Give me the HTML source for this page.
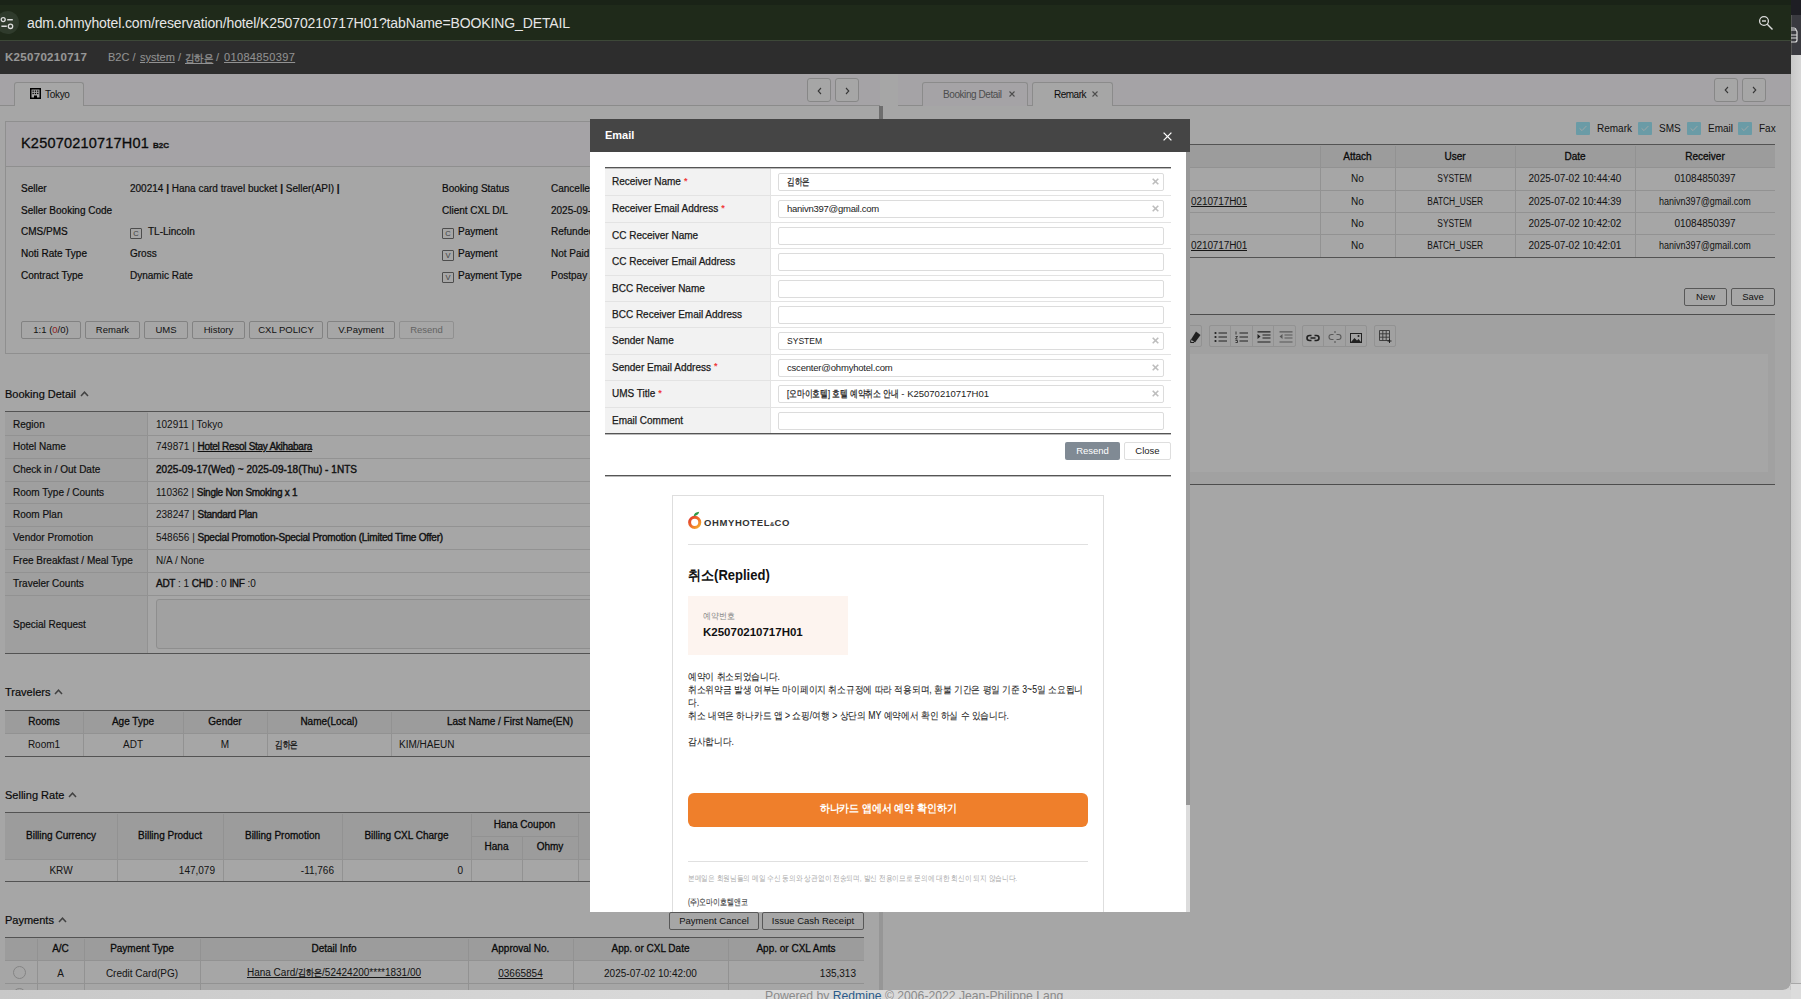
<!DOCTYPE html>
<html><head><meta charset="utf-8">
<style>
*{box-sizing:border-box;margin:0;padding:0}
html,body{width:1801px;height:999px;overflow:hidden}
body{font-family:"Liberation Sans",sans-serif;background:#d4d4d4;position:relative;color:#222}
.abs{position:absolute}
#win{position:absolute;left:0;top:0;width:1791px;height:990px;overflow:hidden;border-bottom-right-radius:8px;background:#fff}
#chrome{position:absolute;left:0;top:0;width:1791px;height:41px;background:#1f2a1a;border-top:5px solid #1a2317;border-bottom:1px solid #3d4838}
#url{position:absolute;left:27px;top:10px;font-size:14px;color:#e6e6e6;white-space:nowrap;letter-spacing:-0.12px}
#page{position:absolute;left:0;top:41px;width:1791px;height:949px;background:#fff}
#crumb{position:absolute;left:0;top:0;width:1791px;height:33px;background:#454545;color:#ddd;font-size:11px}
#overlay{position:absolute;left:0;top:41px;width:1791px;height:949px;background:rgba(0,0,0,.35)}
#modal{position:absolute;left:590px;top:119px;width:600px;height:793px;background:#fff;overflow:hidden}

#crumb b{position:absolute;left:5px;top:10px;font-size:11.5px;color:#e8e8e8;letter-spacing:0.3px}
#crumb .bc{position:absolute;left:108px;top:10px;font-size:11px;color:#e0e0e0;white-space:nowrap}
#crumb .bc u{text-decoration:underline}
#lp{position:absolute;left:0;top:33px;width:883px;height:916px;background:#fff;overflow:hidden}
.tabstrip{position:absolute;left:0;top:0;height:32px;background:#fdfbff;border-bottom:1px solid #d6d6d6}
.tab{position:absolute;top:8px;height:24px;border:1px solid #d6d6d6;border-bottom:none;border-radius:3px 3px 0 0;background:#fff;font-size:10px;color:#222}
.navb{position:absolute;top:4px;width:24px;height:24px;border:1px solid #d0d0d0;border-radius:3px;background:#fff}
.navb svg{position:absolute;left:8px;top:7px}
.card{position:absolute;left:5px;top:47px;width:870px;height:233px;border:1px solid #dcdcdc;background:#fff}
.card .hd{height:45px;margin-bottom:1px;background:#fdfbff;border-bottom:1px solid #dcdcdc;position:relative}
.card .ttl{position:absolute;left:15px;top:13px;font-size:14.5px;color:#111;letter-spacing:0.2px}
.card .ttl small{font-size:8px;font-weight:bold;margin-left:4px;letter-spacing:0;color:#222}
.kv{position:absolute;margin-top:1px;font-size:10px;color:#111;white-space:nowrap;-webkit-text-stroke:0.2px #111}
.kv.v{color:#222}
.badge{display:inline-block;width:12px;height:11px;border:1px solid #777;border-radius:1px;font-size:7.5px;line-height:9px;text-align:center;color:#666;vertical-align:-1px;margin-right:4px;-webkit-text-stroke:0;font-family:"Liberation Sans",sans-serif}
.btn{position:absolute;top:199px;height:18px;border:1px solid #c8c8c8;border-radius:2px;background:#fff;font-size:9.5px;line-height:16px;text-align:center;color:#222}
.sec{position:absolute;left:5px;font-size:11px;color:#111;-webkit-text-stroke:0.2px #111}
.sec svg{margin-left:4px;vertical-align:1px}
table.t{position:absolute;border-collapse:collapse;font-size:10px;color:#222}
table.t td,table.t th{border:1px solid #dedede;font-weight:normal}

.c{font-size:10px;color:#222;white-space:nowrap;overflow:hidden}
.lb{color:#1a1a1a;-webkit-text-stroke:0.2px #1a1a1a}
.hd{color:#111;-webkit-text-stroke:0.3px #111;padding-bottom:2px}
.pbtn{height:18px;border:1px solid #888;border-radius:2px;background:#fff;font-size:9.5px;line-height:16px;text-align:center;color:#222}

.ml{display:flex;align-items:center;font-size:10px;color:#1a1a1a;white-space:nowrap;-webkit-text-stroke:0.25px #1a1a1a}
.req{color:#f03a3a;margin-left:3px;font-weight:bold;font-size:9px;-webkit-text-stroke:0;position:relative;top:-1px}
.inp{width:386px;height:18px;border:1px solid #dcdcdc;border-radius:2px;background:#fff;font-size:9.5px;color:#222;padding-left:8px;line-height:16px;white-space:nowrap}
.kp{font-size:10px;line-height:13px;color:#222;white-space:nowrap}
.sb{font-weight:normal;-webkit-text-stroke:0.4px #1a1a1a;letter-spacing:-0.28px;color:#1a1a1a}
</style></head><body>
<div class="abs" style="left:1790px;top:0;width:11px;height:999px;background:linear-gradient(90deg,#c6c6c6,#cbcbcb 30%,#d7d7d7)"></div>
<div class="abs" style="left:1791px;top:0;width:10px;height:15px;background:#1e1e24"></div>
<div class="abs" style="left:1791px;top:15px;width:10px;height:40px;background:#3a3a40;border-left:1px solid #555"></div>
<svg class="abs" style="left:1789px;top:27px" width="10" height="16" viewBox="0 0 10 16"><path d="M1 3 H6 A2 2 0 0 1 8 5 V13 A2 2 0 0 1 6 15 H1 M1 8 H7.5 M1 11 H7.5" fill="none" stroke="#ddd" stroke-width="1.2"/><path d="M1 1 H5 A2 2 0 0 1 7 3" fill="none" stroke="#ddd" stroke-width="1.2"/></svg>
<div class="abs" style="left:1791px;top:983px;width:10px;height:16px;background:#dcdcdc;border-top:1px solid #a8a8a8"></div>
<div class="abs" style="left:0;top:990px;width:1791px;height:9px;background:linear-gradient(90deg,#c8c8c8,#dadada 40%,#d8d8d8)"></div>
<div class="abs" style="left:765px;top:989px;font-size:12.2px;color:#8a8a8a;white-space:nowrap">Powered by <span style="color:#2a5a8a">Redmine</span> © 2006-2022 Jean-Philippe Lang</div>
<div id="win">
  <div id="chrome">
    <div class="abs" style="left:-4px;top:6px;width:23px;height:23px;border-radius:12px;background:#2f3b2c"></div><svg class="abs" style="left:0;top:6px" width="16" height="20" viewBox="0 0 16 20"><circle cx="3.2" cy="8.6" r="2" fill="none" stroke="#ddd" stroke-width="1.3"/><path d="M7.2 8.8H12.8M1.4 15.2H6.8" stroke="#ddd" stroke-width="1.4"/><circle cx="10.5" cy="15.3" r="2.2" fill="none" stroke="#ddd" stroke-width="1.3"/></svg>
    <svg class="abs" style="left:1758px;top:10px" width="16" height="16" viewBox="0 0 16 16"><circle cx="6" cy="6" r="4.4" fill="none" stroke="#ddd" stroke-width="1.3"/><path d="M4 6H8" stroke="#ddd" stroke-width="1.4"/><path d="M9.3 9.3L14.5 14.5" stroke="#ddd" stroke-width="1.4"/></svg><div id="url">adm.ohmyhotel.com/reservation/hotel/K25070210717H01?tabName=BOOKING_DETAIL</div>
  </div>
  <div id="page">

    <div id="crumb"><b>K25070210717</b><span class="bc">B2C /</span><span class="bc" style="left:140px"><u>system</u> /</span><span class="bc" style="left:185px"><u style="display:inline-block;transform:scaleX(.86);transform-origin:0 0;-webkit-text-stroke:0.25px currentColor">김하은</u></span><span class="bc" style="left:216px">/</span><span class="bc" style="left:224px;letter-spacing:0.35px"><u>01084850397</u></span></div>
    <div id="lp">
      <div class="tabstrip" style="width:880px">
        <div class="tab" style="left:14px;width:70px"><svg class="abs" style="left:15px;top:5px" width="11" height="11" viewBox="0 0 11 11"><rect x="0" y="0" width="11" height="11" fill="#000"/><rect x="1.5" y="1.5" width="8" height="8" fill="#fff"/><g fill="#000"><rect x="2.5" y="2.5" width="1.3" height="1.3"/><rect x="4.8" y="2.5" width="1.3" height="1.3"/><rect x="7.1" y="2.5" width="1.3" height="1.3"/><rect x="2.5" y="4.8" width="1.3" height="1.3"/><rect x="4.8" y="4.8" width="1.3" height="1.3"/><rect x="7.1" y="4.8" width="1.3" height="1.3"/><rect x="4" y="7.5" width="3" height="2.5"/></g></svg><span class="abs" style="left:30px;top:6px;letter-spacing:-0.3px">Tokyo</span></div>
        <div class="navb" style="left:807px"><svg width="7" height="10" viewBox="0 0 7 10"><path d="M5 2 L2.2 5 L5 8" stroke="#555" stroke-width="1.1" fill="none"/></svg></div>
        <div class="navb" style="left:835px"><svg width="7" height="10" viewBox="0 0 7 10"><path d="M2 2 L4.8 5 L2 8" stroke="#555" stroke-width="1.1" fill="none"/></svg></div>
      </div>
      <div class="card">
        <div class="hd"><div class="ttl">K25070210717H01<small>B2C</small></div></div>
        <div class="kv" style="left:15px;top:60px">Seller</div>
        <div class="kv v" style="left:124px;top:60px">200214 <b>|</b> Hana card travel bucket <b>|</b> Seller(API) <b>|</b></div>
        <div class="kv" style="left:15px;top:82px">Seller Booking Code</div>
        <div class="kv" style="left:15px;top:103px">CMS/PMS</div>
        <div class="kv v" style="left:124px;top:103px"><span class="badge" style="margin-right:6px">C</span>TL-Lincoln</div>
        <div class="kv" style="left:15px;top:125px">Noti Rate Type</div>
        <div class="kv v" style="left:124px;top:125px">Gross</div>
        <div class="kv" style="left:15px;top:147px">Contract Type</div>
        <div class="kv v" style="left:124px;top:147px">Dynamic Rate</div>
        <div class="kv" style="left:436px;top:60px">Booking Status</div>
        <div class="kv v" style="left:545px;top:60px">Cancelled</div>
        <div class="kv" style="left:436px;top:82px">Client CXL D/L</div>
        <div class="kv v" style="left:545px;top:82px">2025-09-16 23:59</div>
        <div class="kv" style="left:436px;top:103px"><span class="badge">C</span>Payment</div>
        <div class="kv v" style="left:545px;top:103px">Refunded</div>
        <div class="kv" style="left:436px;top:125px"><span class="badge">V</span>Payment</div>
        <div class="kv v" style="left:545px;top:125px">Not Paid</div>
        <div class="kv" style="left:436px;top:147px"><span class="badge">V</span>Payment Type</div>
        <div class="kv v" style="left:545px;top:147px">Postpay / Card</div>
        <div class="btn" style="left:15px;width:60px">1:1 (<span style="color:#d33">0</span>/0)</div>
        <div class="btn" style="left:79px;width:55px">Remark</div>
        <div class="btn" style="left:138px;width:44px">UMS</div>
        <div class="btn" style="left:186px;width:53px">History</div>
        <div class="btn" style="left:243px;width:74px">CXL POLICY</div>
        <div class="btn" style="left:321px;width:68px">V.Payment</div>
        <div class="btn" style="left:393px;width:55px;color:#999;border-color:#ddd">Resend</div>
      </div>
<!--LPT-->
<div class="sec" style="top:314px">Booking Detail<svg width="9" height="6" viewBox="0 0 9 6"><path d="M1 5 L4.5 1.2 L8 5" stroke="#666" stroke-width="1.5" fill="none"/></svg></div>
<div class="abs" style="left:5px;top:338px;width:143px;height:241px;background:#f5f5f5"></div>
<div class="abs" style="left:5px;top:337px;width:859px;height:1px;background:#808080"></div>
<div class="abs" style="left:5px;top:361px;width:859px;height:1px;background:#e0e0e0"></div>
<div class="abs" style="left:5px;top:384px;width:859px;height:1px;background:#e0e0e0"></div>
<div class="abs" style="left:5px;top:407px;width:859px;height:1px;background:#e0e0e0"></div>
<div class="abs" style="left:5px;top:429px;width:859px;height:1px;background:#e0e0e0"></div>
<div class="abs" style="left:5px;top:452px;width:859px;height:1px;background:#e0e0e0"></div>
<div class="abs" style="left:5px;top:475px;width:859px;height:1px;background:#e0e0e0"></div>
<div class="abs" style="left:5px;top:498px;width:859px;height:1px;background:#e0e0e0"></div>
<div class="abs" style="left:5px;top:521px;width:859px;height:1px;background:#e0e0e0"></div>
<div class="abs" style="left:5px;top:579px;width:859px;height:1px;background:#808080"></div>
<div class="abs" style="left:147px;top:339px;width:1px;height:240px;background:#e0e0e0"></div>
<div class="abs c lb" style="left:5px;top:339px;width:142px;height:22px;display:flex;align-items:center;justify-content:flex-start;padding-left:8px;"><span>Region</span></div>
<div class="abs c vl" style="left:148px;top:339px;width:716px;height:22px;display:flex;align-items:center;justify-content:flex-start;padding-left:8px;"><span>102911 | Tokyo</span></div>
<div class="abs c lb" style="left:5px;top:361px;width:142px;height:23px;display:flex;align-items:center;justify-content:flex-start;padding-left:8px;"><span>Hotel Name</span></div>
<div class="abs c vl" style="left:148px;top:361px;width:716px;height:23px;display:flex;align-items:center;justify-content:flex-start;padding-left:8px;"><span>749871 | <b class="sb"><u>Hotel Resol Stay Akihabara</u></b></span></div>
<div class="abs c lb" style="left:5px;top:384px;width:142px;height:23px;display:flex;align-items:center;justify-content:flex-start;padding-left:8px;"><span>Check in / Out Date</span></div>
<div class="abs c vl" style="left:148px;top:384px;width:716px;height:23px;display:flex;align-items:center;justify-content:flex-start;padding-left:8px;"><span><b class="sb" style="letter-spacing:0.05px">2025-09-17(Wed) ~ 2025-09-18(Thu) - 1NTS</b></span></div>
<div class="abs c lb" style="left:5px;top:407px;width:142px;height:22px;display:flex;align-items:center;justify-content:flex-start;padding-left:8px;"><span>Room Type / Counts</span></div>
<div class="abs c vl" style="left:148px;top:407px;width:716px;height:22px;display:flex;align-items:center;justify-content:flex-start;padding-left:8px;"><span>110362 | <b class="sb">Single Non Smoking x 1</b></span></div>
<div class="abs c lb" style="left:5px;top:429px;width:142px;height:23px;display:flex;align-items:center;justify-content:flex-start;padding-left:8px;"><span>Room Plan</span></div>
<div class="abs c vl" style="left:148px;top:429px;width:716px;height:23px;display:flex;align-items:center;justify-content:flex-start;padding-left:8px;"><span>238247 | <b class="sb">Standard Plan</b></span></div>
<div class="abs c lb" style="left:5px;top:452px;width:142px;height:23px;display:flex;align-items:center;justify-content:flex-start;padding-left:8px;"><span>Vendor Promotion</span></div>
<div class="abs c vl" style="left:148px;top:452px;width:716px;height:23px;display:flex;align-items:center;justify-content:flex-start;padding-left:8px;"><span>548656 | <b class="sb" style="letter-spacing:-0.2px">Special Promotion-Special Promotion (Limited Time Offer)</b></span></div>
<div class="abs c lb" style="left:5px;top:475px;width:142px;height:23px;display:flex;align-items:center;justify-content:flex-start;padding-left:8px;"><span>Free Breakfast / Meal Type</span></div>
<div class="abs c vl" style="left:148px;top:475px;width:716px;height:23px;display:flex;align-items:center;justify-content:flex-start;padding-left:8px;"><span>N/A / None</span></div>
<div class="abs c lb" style="left:5px;top:498px;width:142px;height:23px;display:flex;align-items:center;justify-content:flex-start;padding-left:8px;"><span>Traveler Counts</span></div>
<div class="abs c vl" style="left:148px;top:498px;width:716px;height:23px;display:flex;align-items:center;justify-content:flex-start;padding-left:8px;"><span><b class="sb">ADT</b> : 1 <b class="sb">CHD</b> : 0 <b class="sb">INF</b> :0</span></div>
<div class="abs c lb" style="left:5px;top:521px;width:142px;height:58px;display:flex;align-items:center;justify-content:flex-start;padding-left:8px;"><span>Special Request</span></div>
<div class="abs" style="left:156px;top:525px;width:700px;height:50px;border:1px solid #dadada;border-radius:3px;background:#f7f7f7"></div>
<div class="sec" style="top:612px">Travelers<svg width="9" height="6" viewBox="0 0 9 6"><path d="M1 5 L4.5 1.2 L8 5" stroke="#666" stroke-width="1.5" fill="none"/></svg></div>
<div class="abs" style="left:5px;top:637px;width:859px;height:22px;background:#f0f0f0"></div>
<div class="abs" style="left:5px;top:636px;width:859px;height:1px;background:#808080"></div>
<div class="abs" style="left:5px;top:659px;width:859px;height:1px;background:#e0e0e0"></div>
<div class="abs" style="left:5px;top:682px;width:859px;height:1px;background:#808080"></div>
<div class="abs" style="left:83px;top:638px;width:1px;height:44px;background:#e0e0e0"></div>
<div class="abs" style="left:183px;top:638px;width:1px;height:44px;background:#e0e0e0"></div>
<div class="abs" style="left:267px;top:638px;width:1px;height:44px;background:#e0e0e0"></div>
<div class="abs" style="left:391px;top:638px;width:1px;height:44px;background:#e0e0e0"></div>
<div class="abs" style="left:629px;top:638px;width:1px;height:44px;background:#e0e0e0"></div>
<div class="abs c hd" style="left:5px;top:638px;width:78px;height:21px;display:flex;align-items:center;justify-content:center;"><span>Rooms</span></div>
<div class="abs c hd" style="left:83px;top:638px;width:100px;height:21px;display:flex;align-items:center;justify-content:center;"><span>Age Type</span></div>
<div class="abs c hd" style="left:183px;top:638px;width:84px;height:21px;display:flex;align-items:center;justify-content:center;"><span>Gender</span></div>
<div class="abs c hd" style="left:267px;top:638px;width:124px;height:21px;display:flex;align-items:center;justify-content:center;"><span>Name(Local)</span></div>
<div class="abs c hd" style="left:391px;top:638px;width:238px;height:21px;display:flex;align-items:center;justify-content:center;"><span>Last Name / First Name(EN)</span></div>
<div class="abs" style="left:629px;top:638px;width:1px;height:44px;background:#e0e0e0"></div>
<div class="abs c dt" style="left:5px;top:659px;width:78px;height:23px;display:flex;align-items:center;justify-content:center;"><span>Room1</span></div>
<div class="abs c dt" style="left:83px;top:659px;width:100px;height:23px;display:flex;align-items:center;justify-content:center;"><span>ADT</span></div>
<div class="abs c dt" style="left:183px;top:659px;width:84px;height:23px;display:flex;align-items:center;justify-content:center;"><span>M</span></div>
<div class="abs c dt" style="left:267px;top:659px;width:124px;height:23px;display:flex;align-items:center;justify-content:flex-start;padding-left:8px;"><span><span style="display:inline-block;transform:scaleX(.76);transform-origin:0 50%;margin-right:-7px;-webkit-text-stroke:0.3px currentColor">김하은</span></span></div>
<div class="abs c dt" style="left:391px;top:659px;width:473px;height:23px;display:flex;align-items:center;justify-content:flex-start;padding-left:8px;"><span>KIM/HAEUN</span></div>
<div class="sec" style="top:715px">Selling Rate<svg width="9" height="6" viewBox="0 0 9 6"><path d="M1 5 L4.5 1.2 L8 5" stroke="#666" stroke-width="1.5" fill="none"/></svg></div>
<div class="abs" style="left:5px;top:739px;width:859px;height:46px;background:#f0f0f0"></div>
<div class="abs" style="left:5px;top:738px;width:859px;height:1px;background:#808080"></div>
<div class="abs" style="left:471px;top:762px;width:107px;height:1px;background:#e0e0e0"></div>
<div class="abs" style="left:5px;top:785px;width:859px;height:1px;background:#e0e0e0"></div>
<div class="abs" style="left:5px;top:807px;width:859px;height:1px;background:#808080"></div>
<div class="abs" style="left:117px;top:740px;width:1px;height:67px;background:#e0e0e0"></div>
<div class="abs" style="left:223px;top:740px;width:1px;height:67px;background:#e0e0e0"></div>
<div class="abs" style="left:342px;top:740px;width:1px;height:67px;background:#e0e0e0"></div>
<div class="abs" style="left:471px;top:740px;width:1px;height:67px;background:#e0e0e0"></div>
<div class="abs" style="left:578px;top:740px;width:1px;height:67px;background:#e0e0e0"></div>
<div class="abs" style="left:650px;top:740px;width:1px;height:67px;background:#e0e0e0"></div>
<div class="abs" style="left:522px;top:762px;width:1px;height:45px;background:#e0e0e0"></div>
<div class="abs c hd" style="left:5px;top:740px;width:112px;height:45px;display:flex;align-items:center;justify-content:center;"><span>Billing Currency</span></div>
<div class="abs c hd" style="left:117px;top:740px;width:106px;height:45px;display:flex;align-items:center;justify-content:center;"><span>Billing Product</span></div>
<div class="abs c hd" style="left:223px;top:740px;width:119px;height:45px;display:flex;align-items:center;justify-content:center;"><span>Billing Promotion</span></div>
<div class="abs c hd" style="left:342px;top:740px;width:129px;height:45px;display:flex;align-items:center;justify-content:center;"><span>Billing CXL Charge</span></div>
<div class="abs c hd" style="left:471px;top:740px;width:107px;height:22px;display:flex;align-items:center;justify-content:center;"><span>Hana Coupon</span></div>
<div class="abs c hd" style="left:471px;top:762px;width:51px;height:23px;display:flex;align-items:center;justify-content:center;"><span>Hana</span></div>
<div class="abs c hd" style="left:522px;top:762px;width:56px;height:23px;display:flex;align-items:center;justify-content:center;"><span>Ohmy</span></div>
<div class="abs c dt" style="left:5px;top:785px;width:112px;height:22px;display:flex;align-items:center;justify-content:center;"><span>KRW</span></div>
<div class="abs c dt" style="left:117px;top:785px;width:106px;height:22px;display:flex;align-items:center;justify-content:flex-end;padding-right:8px;"><span>147,079</span></div>
<div class="abs c dt" style="left:223px;top:785px;width:119px;height:22px;display:flex;align-items:center;justify-content:flex-end;padding-right:8px;"><span>-11,766</span></div>
<div class="abs c dt" style="left:342px;top:785px;width:129px;height:22px;display:flex;align-items:center;justify-content:flex-end;padding-right:8px;"><span>0</span></div>
<div class="sec" style="top:840px">Payments<svg width="9" height="6" viewBox="0 0 9 6"><path d="M1 5 L4.5 1.2 L8 5" stroke="#666" stroke-width="1.5" fill="none"/></svg></div>
<div class="abs pbtn" style="left:669px;top:838px;width:90px">Payment Cancel</div>
<div class="abs pbtn" style="left:762px;top:838px;width:102px">Issue Cash Receipt</div>
<div class="abs" style="left:5px;top:864px;width:859px;height:22px;background:#f0f0f0"></div>
<div class="abs" style="left:5px;top:863px;width:859px;height:1px;background:#808080"></div>
<div class="abs" style="left:5px;top:886px;width:859px;height:1px;background:#e0e0e0"></div>
<div class="abs" style="left:5px;top:909px;width:859px;height:1px;background:#e0e0e0"></div>
<div class="abs" style="left:37px;top:865px;width:1px;height:61px;background:#e0e0e0"></div>
<div class="abs" style="left:84px;top:865px;width:1px;height:61px;background:#e0e0e0"></div>
<div class="abs" style="left:200px;top:865px;width:1px;height:61px;background:#e0e0e0"></div>
<div class="abs" style="left:468px;top:865px;width:1px;height:61px;background:#e0e0e0"></div>
<div class="abs" style="left:573px;top:865px;width:1px;height:61px;background:#e0e0e0"></div>
<div class="abs" style="left:728px;top:865px;width:1px;height:61px;background:#e0e0e0"></div>
<div class="abs c hd" style="left:5px;top:865px;width:32px;height:21px;display:flex;align-items:center;justify-content:center;"><span></span></div>
<div class="abs c hd" style="left:37px;top:865px;width:47px;height:21px;display:flex;align-items:center;justify-content:center;"><span>A/C</span></div>
<div class="abs c hd" style="left:84px;top:865px;width:116px;height:21px;display:flex;align-items:center;justify-content:center;"><span>Payment Type</span></div>
<div class="abs c hd" style="left:200px;top:865px;width:268px;height:21px;display:flex;align-items:center;justify-content:center;"><span>Detail Info</span></div>
<div class="abs c hd" style="left:468px;top:865px;width:105px;height:21px;display:flex;align-items:center;justify-content:center;"><span>Approval No.</span></div>
<div class="abs c hd" style="left:573px;top:865px;width:155px;height:21px;display:flex;align-items:center;justify-content:center;"><span>App. or CXL Date</span></div>
<div class="abs c hd" style="left:728px;top:865px;width:136px;height:21px;display:flex;align-items:center;justify-content:center;"><span>App. or CXL Amts</span></div>
<div class="abs c dt" style="left:5px;top:888px;width:32px;height:22px;display:flex;align-items:center;justify-content:center;"><span></span></div>
<div class="abs c dt" style="left:37px;top:888px;width:47px;height:22px;display:flex;align-items:center;justify-content:center;"><span>A</span></div>
<div class="abs c dt" style="left:84px;top:888px;width:116px;height:22px;display:flex;align-items:center;justify-content:center;"><span>Credit Card(PG)</span></div>
<div class="abs c dt" style="left:200px;top:888px;width:268px;height:22px;display:flex;align-items:center;justify-content:center;"><span><u>Hana Card/<span style="display:inline-block;transform:scaleX(.8);transform-origin:0 50%;margin-right:-6px;text-decoration:underline;-webkit-text-stroke:0.3px currentColor">김하은</span>/52424200****1831/00</u></span></div>
<div class="abs c dt" style="left:468px;top:888px;width:105px;height:22px;display:flex;align-items:center;justify-content:center;"><span><u>03665854</u></span></div>
<div class="abs c dt" style="left:573px;top:888px;width:155px;height:22px;display:flex;align-items:center;justify-content:center;"><span>2025-07-02 10:42:00</span></div>
<div class="abs c dt" style="left:728px;top:888px;width:136px;height:22px;display:flex;align-items:center;justify-content:flex-end;padding-right:8px;"><span>135,313</span></div>
<div class="abs" style="left:13px;top:892px;width:13px;height:13px;border:1px solid #ccc;border-radius:7px;background:#fff"></div>
<div class="abs" style="left:13px;top:914px;width:13px;height:13px;border:1px solid #ccc;border-radius:7px;background:#fff"></div>
<div class="abs" style="left:879px;top:32px;width:4px;height:884px;background:#e6e6e6"></div>
<div class="abs" style="left:879px;top:32px;width:4px;height:120px;background:#a9a9a9"></div>
<!--/LPT-->
    </div>
<!--RP-->
<div id="rp" style="position:absolute;left:883px;top:33px;width:908px;height:916px;overflow:hidden">
<div class="abs " style="left:0px;top:0px;width:15px;height:32px;background:#fff"></div>
<div class="abs " style="left:15px;top:0px;width:893px;height:32px;background:#fdfbff;border-bottom:1px solid #d6d6d6"></div>
<div class="abs " style="left:39px;top:8px;width:106px;height:24px;background:#fdfbff;border:1px solid #d6d6d6;border-bottom:none;border-radius:3px 3px 0 0"></div>
<div class="abs" style="left:60px;top:15px;font-size:10px;color:#777;white-space:nowrap;letter-spacing:-0.42px">Booking Detail</div>
<svg class="abs" style="left:126px;top:17px" width="6" height="6" viewBox="0 0 6 6"><path d="M0.5 0.5 L5.5 5.5 M5.5 0.5 L0.5 5.5" stroke="#777" stroke-width="1.1"/></svg>
<div class="abs " style="left:149px;top:8px;width:81px;height:24px;background:#fff;border:1px solid #d6d6d6;border-bottom:none;border-radius:3px 3px 0 0"></div>
<div class="abs" style="left:171px;top:15px;font-size:10px;color:#111;white-space:nowrap;letter-spacing:-0.5px">Remark</div>
<svg class="abs" style="left:209px;top:17px" width="6" height="6" viewBox="0 0 6 6"><path d="M0.5 0.5 L5.5 5.5 M5.5 0.5 L0.5 5.5" stroke="#777" stroke-width="1.1"/></svg>
<div class="abs " style="left:831px;top:4px;width:24px;height:24px;border:1px solid #d0d0d0;border-radius:3px;background:#fff"><svg class="abs" style="left:8px;top:6px" width="7" height="10" viewBox="0 0 7 10"><path d="M5 2 L2.2 5 L5 8" stroke="#555" stroke-width="1.1" fill="none"/></svg></div>
<div class="abs " style="left:859px;top:4px;width:24px;height:24px;border:1px solid #d0d0d0;border-radius:3px;background:#fff"><svg class="abs" style="left:8px;top:6px" width="7" height="10" viewBox="0 0 7 10"><path d="M2 2 L4.8 5 L2 8" stroke="#555" stroke-width="1.1" fill="none"/></svg></div>
<div class="abs " style="left:693px;top:48px;width:14px;height:13px;background:#a4efff;border-radius:1px"><svg class="abs" style="left:3px;top:3px" width="8" height="7" viewBox="0 0 8 7"><path d="M0.6 3.4 L3 5.6 L7.4 1" stroke="#f4fdff" stroke-width="1" fill="none"/></svg></div>
<div class="abs" style="left:714px;top:49px;font-size:10px;color:#222;white-space:nowrap">Remark</div>
<div class="abs " style="left:755px;top:48px;width:14px;height:13px;background:#a4efff;border-radius:1px"><svg class="abs" style="left:3px;top:3px" width="8" height="7" viewBox="0 0 8 7"><path d="M0.6 3.4 L3 5.6 L7.4 1" stroke="#f4fdff" stroke-width="1" fill="none"/></svg></div>
<div class="abs" style="left:776px;top:49px;font-size:10px;color:#222;white-space:nowrap">SMS</div>
<div class="abs " style="left:804px;top:48px;width:14px;height:13px;background:#a4efff;border-radius:1px"><svg class="abs" style="left:3px;top:3px" width="8" height="7" viewBox="0 0 8 7"><path d="M0.6 3.4 L3 5.6 L7.4 1" stroke="#f4fdff" stroke-width="1" fill="none"/></svg></div>
<div class="abs" style="left:825px;top:49px;font-size:10px;color:#222;white-space:nowrap">Email</div>
<div class="abs " style="left:855px;top:48px;width:14px;height:13px;background:#a4efff;border-radius:1px"><svg class="abs" style="left:3px;top:3px" width="8" height="7" viewBox="0 0 8 7"><path d="M0.6 3.4 L3 5.6 L7.4 1" stroke="#f4fdff" stroke-width="1" fill="none"/></svg></div>
<div class="abs" style="left:876px;top:49px;font-size:10px;color:#222;white-space:nowrap">Fax</div>
<div class="abs " style="left:117px;top:71px;width:775px;height:22px;background:#f0f0f0"></div>
<div class="abs " style="left:117px;top:70px;width:775px;height:1px;background:#808080"></div>
<div class="abs " style="left:117px;top:93px;width:775px;height:1px;background:#e0e0e0"></div>
<div class="abs " style="left:117px;top:116px;width:775px;height:1px;background:#e0e0e0"></div>
<div class="abs " style="left:117px;top:138px;width:775px;height:1px;background:#e0e0e0"></div>
<div class="abs " style="left:117px;top:160px;width:775px;height:1px;background:#e0e0e0"></div>
<div class="abs " style="left:117px;top:183px;width:775px;height:1px;background:#808080"></div>
<div class="abs " style="left:117px;top:72px;width:1px;height:111px;background:#e0e0e0"></div>
<div class="abs " style="left:437px;top:72px;width:1px;height:111px;background:#e0e0e0"></div>
<div class="abs " style="left:512px;top:72px;width:1px;height:111px;background:#e0e0e0"></div>
<div class="abs " style="left:632px;top:72px;width:1px;height:111px;background:#e0e0e0"></div>
<div class="abs " style="left:752px;top:72px;width:1px;height:111px;background:#e0e0e0"></div>
<div class="abs c hd" style="left:117px;top:72px;width:320px;height:22px;display:flex;align-items:center;justify-content:center;"><span>Title</span></div>
<div class="abs c hd" style="left:437px;top:72px;width:75px;height:22px;display:flex;align-items:center;justify-content:center;"><span>Attach</span></div>
<div class="abs c hd" style="left:512px;top:72px;width:120px;height:22px;display:flex;align-items:center;justify-content:center;"><span>User</span></div>
<div class="abs c hd" style="left:632px;top:72px;width:120px;height:22px;display:flex;align-items:center;justify-content:center;"><span>Date</span></div>
<div class="abs c hd" style="left:752px;top:72px;width:140px;height:22px;display:flex;align-items:center;justify-content:center;"><span>Receiver</span></div>
<div class="abs c" style="left:437px;top:93px;width:75px;height:23px;display:flex;align-items:center;justify-content:center;"><span>No</span></div>
<div class="abs c" style="left:512px;top:93px;width:120px;height:23px;display:flex;align-items:center;justify-content:center;"><span><span style="display:inline-block;transform:scaleX(.84)">SYSTEM</span></span></div>
<div class="abs c" style="left:632px;top:93px;width:120px;height:23px;display:flex;align-items:center;justify-content:center;"><span>2025-07-02 10:44:40</span></div>
<div class="abs c" style="left:752px;top:93px;width:140px;height:23px;display:flex;align-items:center;justify-content:center;"><span>01084850397</span></div>
<div class="abs c" style="left:307px;top:116px;height:22px;display:flex;align-items:center;padding-left:1px;border-bottom:0"><span style="white-space:nowrap;text-decoration:underline;letter-spacing:-0.1px">0210717H01</span></div>
<div class="abs c" style="left:437px;top:116px;width:75px;height:22px;display:flex;align-items:center;justify-content:center;"><span>No</span></div>
<div class="abs c" style="left:512px;top:116px;width:120px;height:22px;display:flex;align-items:center;justify-content:center;"><span><span style="display:inline-block;transform:scaleX(.84)">BATCH_USER</span></span></div>
<div class="abs c" style="left:632px;top:116px;width:120px;height:22px;display:flex;align-items:center;justify-content:center;"><span>2025-07-02 10:44:39</span></div>
<div class="abs c" style="left:752px;top:116px;width:140px;height:22px;display:flex;align-items:center;justify-content:center;"><span><span style="display:inline-block;transform:scaleX(.9)">hanivn397@gmail.com</span></span></div>
<div class="abs c" style="left:437px;top:138px;width:75px;height:22px;display:flex;align-items:center;justify-content:center;"><span>No</span></div>
<div class="abs c" style="left:512px;top:138px;width:120px;height:22px;display:flex;align-items:center;justify-content:center;"><span><span style="display:inline-block;transform:scaleX(.84)">SYSTEM</span></span></div>
<div class="abs c" style="left:632px;top:138px;width:120px;height:22px;display:flex;align-items:center;justify-content:center;"><span>2025-07-02 10:42:02</span></div>
<div class="abs c" style="left:752px;top:138px;width:140px;height:22px;display:flex;align-items:center;justify-content:center;"><span>01084850397</span></div>
<div class="abs c" style="left:307px;top:160px;height:23px;display:flex;align-items:center;padding-left:1px;border-bottom:0"><span style="white-space:nowrap;text-decoration:underline;letter-spacing:-0.1px">0210717H01</span></div>
<div class="abs c" style="left:437px;top:160px;width:75px;height:23px;display:flex;align-items:center;justify-content:center;"><span>No</span></div>
<div class="abs c" style="left:512px;top:160px;width:120px;height:23px;display:flex;align-items:center;justify-content:center;"><span><span style="display:inline-block;transform:scaleX(.84)">BATCH_USER</span></span></div>
<div class="abs c" style="left:632px;top:160px;width:120px;height:23px;display:flex;align-items:center;justify-content:center;"><span>2025-07-02 10:42:01</span></div>
<div class="abs c" style="left:752px;top:160px;width:140px;height:23px;display:flex;align-items:center;justify-content:center;"><span><span style="display:inline-block;transform:scaleX(.9)">hanivn397@gmail.com</span></span></div>
<div class="abs pbtn" style="left:801px;top:214px;width:43px;height:18px;">New</div>
<div class="abs pbtn" style="left:848px;top:214px;width:44px;height:18px;">Save</div>
<div class="abs " style="left:117px;top:240px;width:775px;height:171px;background:#f7f7f7;border-top:1px solid #777;border-bottom:1px solid #777"></div>
<div class="abs " style="left:117px;top:280px;width:768px;height:118px;background:#fff"></div>
<div class="abs " style="left:297px;top:251px;width:22px;height:22px;border:1px solid #e0e0e0;border-radius:2px"></div>
<div class="abs " style="left:326px;top:251px;width:87px;height:22px;border:1px solid #e0e0e0;border-radius:2px"></div>
<div class="abs " style="left:347px;top:251px;width:1px;height:22px;background:#e0e0e0"></div>
<div class="abs " style="left:369px;top:251px;width:1px;height:22px;background:#e0e0e0"></div>
<div class="abs " style="left:390px;top:251px;width:1px;height:22px;background:#e0e0e0"></div>
<div class="abs " style="left:419px;top:251px;width:65px;height:22px;border:1px solid #e0e0e0;border-radius:2px"></div>
<div class="abs " style="left:440px;top:251px;width:1px;height:22px;background:#e0e0e0"></div>
<div class="abs " style="left:462px;top:251px;width:1px;height:22px;background:#e0e0e0"></div>
<div class="abs " style="left:491px;top:251px;width:22px;height:22px;border:1px solid #e0e0e0;border-radius:2px"></div>
<div class="abs" style="left:307px;top:255px"><svg width="11" height="12" viewBox="0 0 11 12"><path d="M6 0.5L10.5 4L5 11.5L1 8.5Z" fill="#333"/><path d="M1 8.5L0.5 11.5H4" stroke="#333" stroke-width="1" fill="none"/></svg></div>
<div class="abs" style="left:331px;top:255px"><svg width="14" height="12" viewBox="0 0 14 12"><circle cx="1.5" cy="2" r="1.1" fill="#333"/><circle cx="1.5" cy="6" r="1.1" fill="#333"/><circle cx="1.5" cy="10" r="1.1" fill="#333"/><path d="M4.5 2H13M4.5 6H13M4.5 10H13" stroke="#333" stroke-width="1"/></svg></div>
<div class="abs" style="left:352px;top:255px"><svg width="14" height="12" viewBox="0 0 14 12"><path d="M1 0.5V3.5M0.5 5.5H2.5L0.5 8H2.5M0.5 9.5H2.5V11.5H0.5" stroke="#333" stroke-width="0.8" fill="none"/><path d="M4.5 2H13M4.5 6H13M4.5 10H13" stroke="#333" stroke-width="1"/></svg></div>
<div class="abs" style="left:374px;top:255px"><svg width="14" height="12" viewBox="0 0 14 12"><path d="M0.5 0.8H13.5M5.5 4H13.5M5.5 7H13.5M0.5 11H13.5" stroke="#333" stroke-width="1.2"/><path d="M0.5 3L3.5 5.5L0.5 8Z" fill="#333"/></svg></div>
<div class="abs" style="left:396px;top:255px"><svg width="14" height="12" viewBox="0 0 14 12"><path d="M0.5 0.8H13.5M5.5 4H13.5M5.5 7H13.5M0.5 11H13.5" stroke="#888" stroke-width="1.2"/><path d="M3.5 3L0.5 5.5L3.5 8Z" fill="#888"/></svg></div>
<div class="abs" style="left:423px;top:255px"><svg width="14" height="10" viewBox="0 0 14 10"><path d="M5.5 2.5H3.5A2.5 2.5 0 0 0 3.5 7.5H5.5M8.5 2.5H10.5A2.5 2.5 0 0 1 10.5 7.5H8.5M4.5 5H9.5" stroke="#333" stroke-width="1.6" fill="none"/></svg></div>
<div class="abs" style="left:445px;top:255px"><svg width="14" height="12" viewBox="0 0 14 12"><path d="M5.5 3.5H3.5A2.5 2.5 0 0 0 3.5 8.5H5.5M8.5 3.5H10.5A2.5 2.5 0 0 1 10.5 8.5H8.5M7 0V2M7 10V12" stroke="#888" stroke-width="1.1" fill="none"/></svg></div>
<div class="abs" style="left:467px;top:255px"><svg width="12" height="10" viewBox="0 0 12 10"><rect x="0.5" y="0.5" width="11" height="9" fill="none" stroke="#333" stroke-width="1"/><path d="M1 9L4.5 5L7 7.5L8.5 6L11 9Z" fill="#333"/><circle cx="8.5" cy="3" r="1" fill="#333"/></svg></div>
<div class="abs" style="left:496px;top:255px"><svg width="13" height="13" viewBox="0 0 13 13"><path d="M0.5 0.5H10.5V10.5H0.5ZM0.5 3.8H10.5M0.5 7.2H10.5M3.8 0.5V10.5M7.2 0.5V10.5" stroke="#555" stroke-width="0.9" fill="none"/><path d="M10.5 9V13M8.5 11H12.5" stroke="#333" stroke-width="1"/></svg></div>
<div class="abs " style="left:907px;top:0px;width:1px;height:916px;background:#f2f2f2"></div>
</div>
<!--/RP-->
  </div>
  <div id="overlay"></div>
  <div id="modal">
<!--MODAL-->
<div class="abs" style="left:0px;top:0px;width:600px;height:33px;background:#454545"></div>
<div class="abs" style="left:15px;top:10px;font-size:11px;font-weight:bold;color:#fff">Email</div>
<svg class="abs" style="left:573px;top:13px" width="9" height="9" viewBox="0 0 9 9"><path d="M0.6 0.6 L8.4 8.4 M8.4 0.6 L0.6 8.4" stroke="#fff" stroke-width="1.3"/></svg>
<div class="abs" style="left:596px;top:33px;width:4px;height:653px;background:#989898"></div>
<div class="abs" style="left:596px;top:686px;width:4px;height:107px;background:#dcdcdc"></div>
<div class="abs" style="left:15px;top:48px;width:566px;height:1px;background:#555"></div>
<div class="abs" style="left:15px;top:49px;width:566px;height:1px;background:#bbb"></div>
<div class="abs" style="left:15px;top:50px;width:165px;height:264px;background:#f2f2f2"></div>
<div class="abs" style="left:180px;top:50px;width:1px;height:264px;background:#e3e3e3"></div>
<div class="abs" style="left:15px;top:76px;width:566px;height:1px;background:#e3e3e3"></div>
<div class="abs" style="left:15px;top:103px;width:566px;height:1px;background:#e3e3e3"></div>
<div class="abs" style="left:15px;top:129px;width:566px;height:1px;background:#e3e3e3"></div>
<div class="abs" style="left:15px;top:156px;width:566px;height:1px;background:#e3e3e3"></div>
<div class="abs" style="left:15px;top:182px;width:566px;height:1px;background:#e3e3e3"></div>
<div class="abs" style="left:15px;top:208px;width:566px;height:1px;background:#e3e3e3"></div>
<div class="abs" style="left:15px;top:235px;width:566px;height:1px;background:#e3e3e3"></div>
<div class="abs" style="left:15px;top:261px;width:566px;height:1px;background:#e3e3e3"></div>
<div class="abs" style="left:15px;top:288px;width:566px;height:1px;background:#e3e3e3"></div>
<div class="abs" style="left:15px;top:314px;width:566px;height:1px;background:#555"></div>
<div class="abs" style="left:15px;top:315px;width:566px;height:1px;background:#bbb"></div>
<div class="abs ml" style="left:22px;top:49px;height:27px">Receiver Name <span class="req">*</span></div>
<div class="abs inp" style="left:188px;top:54px"><span><span style="display:inline-block;transform:scaleX(.75);transform-origin:0 50%;-webkit-text-stroke:0.25px currentColor">김하은</span></span><svg class="abs" style="right:4px;top:4px" width="7" height="7" viewBox="0 0 7 7"><path d="M0.7 0.7 L6.3 6.3 M6.3 0.7 L0.7 6.3" stroke="#bdbdbd" stroke-width="1.6"/></svg></div>
<div class="abs ml" style="left:22px;top:76px;height:27px">Receiver Email Address <span class="req">*</span></div>
<div class="abs inp" style="left:188px;top:81px"><span><span style="letter-spacing:-0.25px">hanivn397@gmail.com</span></span><svg class="abs" style="right:4px;top:4px" width="7" height="7" viewBox="0 0 7 7"><path d="M0.7 0.7 L6.3 6.3 M6.3 0.7 L0.7 6.3" stroke="#bdbdbd" stroke-width="1.6"/></svg></div>
<div class="abs ml" style="left:22px;top:103px;height:26px">CC Receiver Name</div>
<div class="abs inp" style="left:188px;top:108px"><span></span></div>
<div class="abs ml" style="left:22px;top:129px;height:27px">CC Receiver Email Address</div>
<div class="abs inp" style="left:188px;top:134px"><span></span></div>
<div class="abs ml" style="left:22px;top:156px;height:26px">BCC Receiver Name</div>
<div class="abs inp" style="left:188px;top:161px"><span></span></div>
<div class="abs ml" style="left:22px;top:182px;height:26px">BCC Receiver Email Address</div>
<div class="abs inp" style="left:188px;top:187px"><span></span></div>
<div class="abs ml" style="left:22px;top:208px;height:27px">Sender Name</div>
<div class="abs inp" style="left:188px;top:213px"><span><span style="display:inline-block;transform:scaleX(.9);transform-origin:0 50%">SYSTEM</span></span><svg class="abs" style="right:4px;top:4px" width="7" height="7" viewBox="0 0 7 7"><path d="M0.7 0.7 L6.3 6.3 M6.3 0.7 L0.7 6.3" stroke="#bdbdbd" stroke-width="1.6"/></svg></div>
<div class="abs ml" style="left:22px;top:235px;height:26px">Sender Email Address <span class="req">*</span></div>
<div class="abs inp" style="left:188px;top:240px"><span><span style="letter-spacing:-0.2px">cscenter@ohmyhotel.com</span></span><svg class="abs" style="right:4px;top:4px" width="7" height="7" viewBox="0 0 7 7"><path d="M0.7 0.7 L6.3 6.3 M6.3 0.7 L0.7 6.3" stroke="#bdbdbd" stroke-width="1.6"/></svg></div>
<div class="abs ml" style="left:22px;top:261px;height:27px">UMS Title <span class="req">*</span></div>
<div class="abs inp" style="left:188px;top:266px"><span><span style="display:inline-block;transform:scaleX(.78);transform-origin:0 50%;margin-right:-31.5px;-webkit-text-stroke:0.25px currentColor">[오마이호텔] 호텔 예약취소 안내</span> - K25070210717H01</span><svg class="abs" style="right:4px;top:4px" width="7" height="7" viewBox="0 0 7 7"><path d="M0.7 0.7 L6.3 6.3 M6.3 0.7 L0.7 6.3" stroke="#bdbdbd" stroke-width="1.6"/></svg></div>
<div class="abs ml" style="left:22px;top:288px;height:26px">Email Comment</div>
<div class="abs inp" style="left:188px;top:293px"><span></span></div>
<div class="abs" style="left:475px;top:323px;width:55px;height:18px;background:#808a94;border-radius:2px;color:#fff;font-size:9.5px;line-height:18px;text-align:center">Resend</div>
<div class="abs" style="left:534px;top:323px;width:47px;height:18px;background:#fff;border:1px solid #dedede;border-radius:2px;color:#222;font-size:9.5px;line-height:16px;text-align:center">Close</div>
<div class="abs" style="left:15px;top:356px;width:566px;height:1px;background:#555"></div>
<div class="abs" style="left:15px;top:357px;width:566px;height:1px;background:#bbb"></div>
<div class="abs" style="left:82px;top:376px;width:432px;height:420px;border:1px solid #dedede;border-bottom:none;background:#fff"></div>
<svg class="abs" style="left:98px;top:391px" width="16" height="20" viewBox="0 0 16 20"><defs><linearGradient id="og" x1="0" y1="0" x2="1" y2="1"><stop offset="0" stop-color="#e03a2c"/><stop offset="0.6" stop-color="#f07a2a"/><stop offset="1" stop-color="#f6b12e"/></linearGradient></defs><circle cx="6.7" cy="12.3" r="5.1" fill="none" stroke="url(#og)" stroke-width="3"/><path d="M5.6 6.2 C5.8 3.6 8 2 11.2 1.8 C10.8 4.4 8.6 6 5.6 6.2 Z" fill="#2e9a48"/></svg>
<div class="abs" style="left:114px;top:398px;font-size:9.5px;font-weight:bold;color:#333;letter-spacing:0.6px;white-space:nowrap">OHMYHOTEL<span style="font-size:6px;letter-spacing:0">&amp;</span>CO</div>
<div class="abs" style="left:98px;top:425px;width:400px;height:1px;background:#e0e0e0"></div>
<div class="abs" style="left:98px;top:448px;font-size:14px;font-weight:bold;color:#111;white-space:nowrap;transform:scaleX(0.93);transform-origin:0 0">취소(Replied)</div>
<div class="abs" style="left:98px;top:477px;width:160px;height:59px;background:#fdf4ef"></div>
<div class="abs" style="left:113px;top:492px;font-size:8.5px;color:#888;white-space:nowrap;transform:scaleX(0.88);transform-origin:0 0">예약번호</div>
<div class="abs" style="left:113px;top:507px;font-size:11.5px;font-weight:bold;color:#111;white-space:nowrap">K25070210717H01</div>
<div class="abs kp" id="kp0" style="left:98px;top:551px;transform:scaleX(0.872);transform-origin:0 0;-webkit-text-stroke:0.08px currentColor">예약이 취소되었습니다.</div>
<div class="abs kp" id="kp1" style="left:98px;top:564px;transform:scaleX(0.872);transform-origin:0 0;-webkit-text-stroke:0.08px currentColor">취소위약금 발생 여부는 마이페이지 취소규정에 따라 적용되며, 환불 기간은 평일 기준 3~5일 소요됩니</div>
<div class="abs kp" id="kp2" style="left:98px;top:577px;transform:scaleX(0.872);transform-origin:0 0;-webkit-text-stroke:0.08px currentColor">다.</div>
<div class="abs kp" id="kp3" style="left:98px;top:590px;transform:scaleX(0.872);transform-origin:0 0;-webkit-text-stroke:0.08px currentColor">취소 내역은 하나카드 앱 &gt; 쇼핑/여행 &gt; 상단의 MY 예약에서 확인 하실 수 있습니다.</div>
<div class="abs kp" id="kp4" style="left:98px;top:616px;transform:scaleX(0.872);transform-origin:0 0;-webkit-text-stroke:0.08px currentColor">감사합니다.</div>
<div class="abs" style="left:98px;top:674px;width:400px;height:34px;background:#ef7f2b;border-radius:6px;color:#fff;font-size:11px;font-weight:bold;text-align:center;line-height:31px"><span style="display:inline-block;transform:scaleX(0.9)">하나카드 앱에서 예약 확인하기</span></div>
<div class="abs" style="left:98px;top:742px;width:400px;height:1px;background:#e0e0e0"></div>
<div class="abs" style="left:98px;top:754px;font-size:8px;color:#aaa;white-space:nowrap;transform:scaleX(0.837);transform-origin:0 0">본메일은 회원님들의 메일 수신 동의와 상관없이 전송되며, 발신 전용이므로 문의에 대한 회신이 되지 않습니다.</div>
<div class="abs" style="left:98px;top:778px;font-size:8.5px;color:#444;white-space:nowrap;transform:scaleX(0.77);transform-origin:0 0;-webkit-text-stroke:0.15px currentColor">(주)오마이호텔앤코</div>
<!--/MODAL-->
  </div>
</div>
</body></html>
